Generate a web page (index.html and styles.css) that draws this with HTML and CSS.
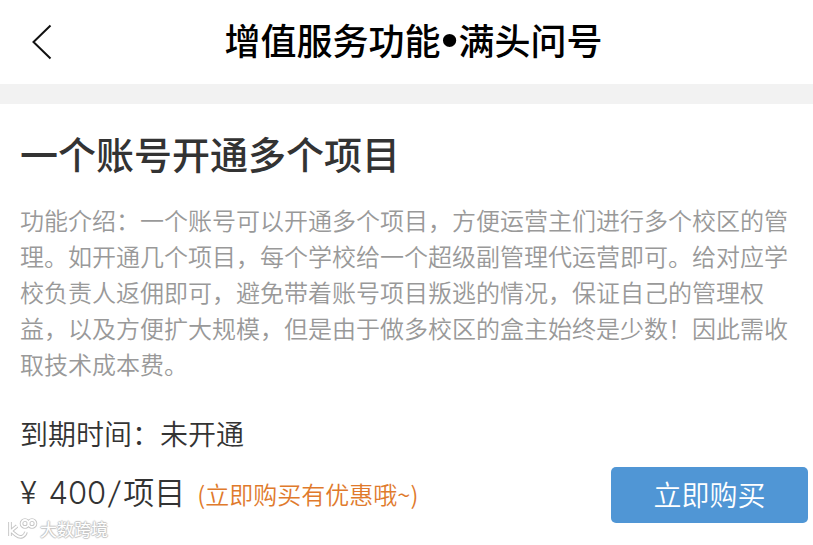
FILE: index.html
```html
<!DOCTYPE html>
<html lang="zh-CN">
<head>
<meta charset="utf-8">
<title>增值服务功能</title>
<link rel="stylesheet" href="styles.css">
</head>
<body>
<header class="navbar">
  <svg class="back" viewBox="0 0 22 36"><path d="M19.5 1.5 2.5 18 19.5 34.5"/></svg>
  <h1 class="nav-title"><span>增值服务功能</span><span class="dot">•</span><span>满头问号</span></h1>
</header>
<main class="content">
  <h2 class="heading">一个账号开通多个项目</h2>
  <p class="intro"><span>功能介绍：一个账号可以开通多个项目，方便运营主们进行多个校区的管</span><span>理。如开通几个项目，每个学校给一个超级副管理代运营即可。给对应学</span><span>校负责人返佣即可，避免带着账号项目叛逃的情况，保证自己的管理权</span><span>益，以及方便扩大规模，但是由于做多校区的盒主始终是少数！因此需收</span><span>取技术成本费。</span></p>
  <p class="expiry">到期时间：未开通</p>
  <div class="purchase">
    <p class="price"><span class="amount">¥ 400<span class="slash">/</span><span class="unit">项目</span></span><span class="promo">(立即购买有优惠哦~)</span></p>
    <button class="buy">立即购买</button>
  </div>
</main>
<div class="watermark">
  <svg class="mark" viewBox="0 0 30 22">
    <g class="mark-edge"><path d="M3 4v14M10 8 4 13l5 4c5 4 9 1 10-3"/><circle cx="18" cy="5.5" r="3.5"/><circle cx="25" cy="5.5" r="3.5"/></g>
    <g class="mark-fill"><path d="M3 4v14M10 8 4 13l5 4c5 4 9 1 10-3"/><circle cx="18" cy="5.5" r="3.5"/><circle cx="25" cy="5.5" r="3.5"/></g>
  </svg>
  <span>大数跨境</span>
</div>
</body>
</html>
```
FILE: styles.css
```css
* { box-sizing: border-box; margin: 0; padding: 0; }
body { width: 813px; height: 545px; overflow: hidden; background: #fff; color: #333; font-family: "Noto Sans CJK SC", sans-serif; }
.navbar { height: 104px; border-bottom: 20px solid #f2f2f2; display: grid; grid-template-columns: 72px 1fr 58px; align-items: center; }
.back { width: 22px; height: 36px; margin-left: 31px; fill: none; stroke: #111; stroke-width: 2; }
.nav-title { display: flex; justify-content: center; padding-bottom: 7px; font-size: 36px; line-height: 52px; font-weight: 500; color: #000; white-space: nowrap; }
.dot { width: 18px; display: flex; justify-content: center; font-family: "Liberation Sans", sans-serif; font-size: 49px; line-height: 53px; height: 52px; }
.content { padding: 22px 5px 0 20px; }
.heading { font-size: 38px; line-height: 54px; font-weight: 500; }
.intro { margin-top: 22px; font-size: 24px; line-height: 36px; font-weight: 350; color: #999; }
.intro span { display: block; white-space: nowrap; }
.expiry { margin-top: 33px; font-size: 28px; line-height: 36px; font-weight: 350; }
.purchase { display: flex; justify-content: space-between; margin-top: 16px; }
.price { display: flex; align-items: center; height: 51px; white-space: nowrap; }
.amount { display: flex; height: 46px; font-family: Inter, "Noto Sans CJK SC", sans-serif; font-size: 31px; line-height: 46px; font-weight: 300; word-spacing: 3px; }
.slash { width: 17px; text-align: center; transform: skewX(-8deg); }
.unit { font-family: "Noto Sans CJK SC", sans-serif; font-weight: 350; line-height: 41px; }
.promo { margin-left: 12px; padding-top: 3px; font-size: 24px; line-height: 36px; font-weight: 350; color: #e07a2c; }
.buy { width: 197px; height: 56px; padding-bottom: 2px; border: 0; border-radius: 5px; background: #5096d5; color: #fff; font: 350 28px "Noto Sans CJK SC", sans-serif; }
.watermark { position: absolute; left: 7px; top: 518px; display: flex; align-items: center; font-size: 17px; line-height: 22px; font-weight: 400; color: #fff; text-shadow: 1px 0 1px #c4c4c4, -1px 0 1px #c4c4c4, 0 1px 1px #c4c4c4, 0 -1px 1px #c4c4c4; }
.mark { width: 30px; height: 22px; margin-right: 3px; fill: none; overflow: visible; }
.mark-edge { stroke: #c4c4c4; stroke-width: 3.6; }
.mark-fill { stroke: #fff; stroke-width: 1.8; }
```
